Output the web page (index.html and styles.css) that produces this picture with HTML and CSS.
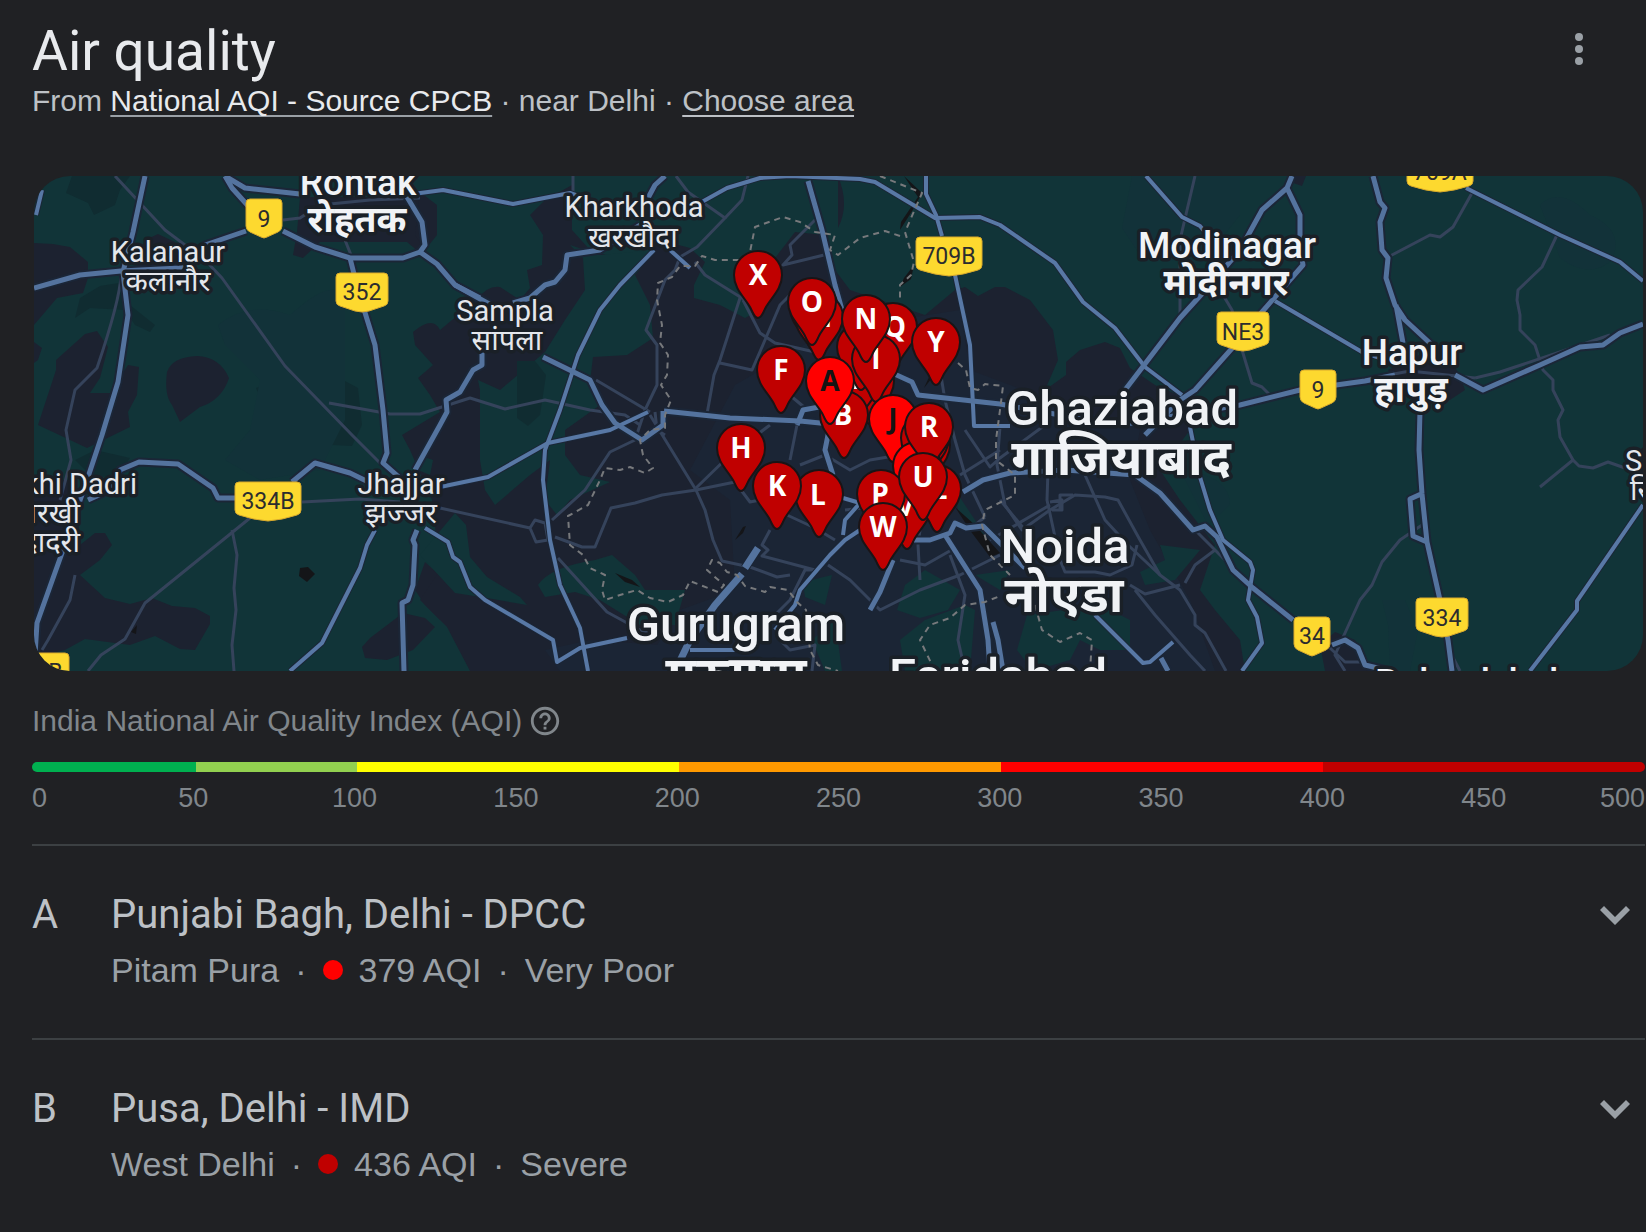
FILE: index.html
```html
<!DOCTYPE html>
<html lang="en">
<head>
  <meta charset="UTF-8">
  <meta name="viewport" content="width=device-width, initial-scale=1.0">
  <title>Air quality</title>
  <link rel="stylesheet" href="styles.css">
</head>
<body>
  <main class="panel">
    <header class="header">
      <div>
        <h1>Air quality</h1>
        <p class="source">From <a class="source-link" href="#">National AQI - Source CPCB</a> · near Delhi · <a href="#">Choose area</a></p>
      </div>
      <button class="icon-button" aria-label="More options">
        <svg width="36" height="36" viewBox="0 0 36 36"><circle cx="18" cy="6" r="4"/><circle cx="18" cy="18" r="4"/><circle cx="18" cy="30" r="4"/></svg>
      </button>
    </header>

    <!-- Map -->
    <svg class="map" viewBox="34 176 1609 495" role="img" aria-label="Map of stations near Delhi">
      <defs>
        <path id="pin" d="M0 43C-3 43-4 40-6 36C-10 25-24 16-24 0A24 24 0 0 1 24 0C24 16 10 25 6 36C4 40 3 43 0 43Z"/>
        <path id="shield1" d="M-14-19H14Q18-19 18-15V8Q18 12 14 14L3 19Q0 21-3 19L-14 14Q-18 12-18 8V-15Q-18-19-14-19Z"/>
        <path id="shield3" d="M-22-19H22Q26-19 26-15V9Q26 13 22 14L7 19Q0 21-7 19L-22 14Q-26 13-26 9V-15Q-26-19-22-19Z"/>
        <path id="shield4" d="M-29-19H29Q33-19 33-15V9Q33 13 29 14Q14 19 0 20Q-14 19-29 14Q-33 13-33 9V-15Q-33-19-29-19Z"/>
        <g id="highways">
          <path d="M145 176L133 232L123 272L128 315L118 382L102 435L88 477L62 553L37 623L35 655"/>
          <path d="M34 288L80 275L121 271L180 268L205 245L246 231M283 231L315 247L350 258H403L420 252L437 264L455 285L500 310M543 357L590 380L602 405L615 423L642 440L663 425V411"/>
          <path d="M225 176L232 188L250 208M225 176L245 188L300 194M407 197L422 222L425 245L420 252M350 258L358 290L375 345L383 410L387 453L383 463L400 478L405 500M417 530L413 540L415 545L413 585L408 600L402 603L404 671"/>
          <path d="M415 470L440 425L447 412L446 400L460 392L473 370L482 365V350M513 303L530 298L545 285L555 282L565 270L567 255L600 250L640 225M648 198L655 185L665 176"/>
          <path d="M455 285L480 298M88 500L110 490L120 470L139 462L178 464L213 488L218 498H235M292 482L315 463L350 473L385 490"/>
          <path d="M808 181L822 230L835 285L842 310M890 372L912 382L918 395L1000 404L1060 415L1120 425L1240 405L1300 390L1365 381L1395 375M1455 375L1483 390L1540 365L1580 347L1603 345L1620 333L1643 324"/>
          <path d="M664 411L730 418L800 421L830 424M830 405L803 410L797 425"/>
          <path d="M1125 390L1180 318L1210 285L1240 250L1262 210L1287 188L1292 176M1287 188L1300 215V245L1303 265L1255 320L1235 345L1195 390L1180 400L1145 435"/>
          <path d="M1373 176L1380 202L1385 208L1380 222L1382 250L1388 258L1386 278L1395 305L1405 320L1432 345M1396 305L1403 343M1420 410L1419 450L1422 494L1427 542L1440 600L1448 640L1452 671M1421 494L1410 499L1413 536L1427 542"/>
          <path d="M963 492L983 480L1010 473L1065 470L1135 475L1160 493L1193 530L1205 526L1217 537L1233 570L1253 588L1293 620M1332 645L1345 640L1358 648L1365 665L1390 671"/>
          <path d="M914 540L930 540L950 533L955 523L966 528L983 526L995 538L1025 568M945 535L980 590L988 640L990 671M993 622L998 640L1003 671M1161 658L1168 671M893 560L880 592L870 610M829 430L825 450L833 475"/>
        </g>
        <g id="main-roads">
          <path d="M413 194L443 190L513 204L570 193L595 202M700 203L727 188L760 178L790 176L860 179L875 182L935 218L980 217L1000 225L1055 263L1083 302L1115 328L1145 367L1182 395"/>
          <path d="M654 250L620 285L600 310L578 355L560 410L545 450L543 480L550 540L560 585L580 628L588 671"/>
          <path d="M375 530L367 545L360 568L322 643L290 671M440 487L488 477L548 443L610 430L648 412M425 528L448 542L453 557L460 562L470 587L485 600L553 640L557 662L580 648L627 638"/>
          <path d="M926 176V194L936 215L942 236M955 275L970 345L974 426H1010M670 250L690 268"/>
          <path d="M1146 176L1182 217L1200 226L1205 232M1275 301L1362 352L1380 358M1466 188L1560 235L1620 262L1643 281M1643 505L1577 601V610L1530 671"/>
          <path d="M1190 427L1200 477L1210 510L1223 540L1250 562L1253 570L1248 600L1257 617L1262 643L1242 671M1095 615L1100 620L1143 663L1150 662L1173 642"/>
          <path d="M860 530L845 540L830 555L800 590L795 605L775 630M690 650H735M843 498L860 503L845 520L843 535M36 215L42 190"/>
        </g>
        <path id="expressway" d="M758 548L745 568M742 574L715 605L690 640L678 665"/>
      </defs>

      <rect class="land" x="34" y="176" width="1609" height="495"/>

      <g class="shade">
        <path d="M72 176H130L120 190L115 205L94 215L88 203L66 193Z"/>
        <path d="M75 318L80 298L100 286L125 282L130 305L155 325L150 332L135 325L125 310L90 308Z"/>
        <path d="M256 388L282 378L284 398L305 405L315 425L310 446H298L302 430L285 418L262 402Z"/>
        <path d="M343 380L358 388L362 425L352 446L332 445Z"/>
        <path d="M75 460L95 450L130 458L122 470L95 480Z"/>
      </g>
      <g class="tint">
        <path d="M218 325Q250 300 290 315Q340 270 345 305V420L320 470L260 480L225 460L250 430L260 380L225 345Z"/>
        <path d="M1132 176H1240V215L1200 265L1140 255L1122 228Z"/>
        <path d="M1540 205Q1560 185 1590 215Q1625 230 1612 260Q1590 280 1560 258Z"/>
        <path d="M1382 600H1405L1418 630L1410 671H1390L1388 625Z"/>
        <path d="M1180 470Q1230 475 1230 505L1208 525Z"/>
      </g>

      <!-- Built-up areas -->
      <g class="urban">
        <path d="M34 243L53 244L70 247L88 262V278L83 293L57 298L40 318L34 325Z"/>
        <path d="M97 331L108 347L100 378L90 393H110L128 365L139 367L137 395L128 412L130 427L87 448L70 440L38 425L56 370V360L85 334Z"/>
        <path d="M34 342L42 348L38 360L34 363Z"/>
        <path d="M167 372Q172 357 197 356Q220 357 229 378Q222 400 200 407L180 422L172 405Q164 395 167 372Z"/>
        <path d="M145 240L158 234L175 242L182 258L198 270L170 275L135 272Z"/>
        <path d="M300 197H413L437 208V232L420 253L407 242H320L303 258L293 255L297 232Z"/>
        <path d="M34 480H75L80 545L95 533H105L112 545L100 560L80 575L105 598L130 604L152 598L172 606L195 608L210 616V624L195 650L180 649L155 636L130 645L85 639L65 650L45 655L34 650Z"/>
        <path d="M362 647L370 638L403 613L425 618L435 627L413 650L387 660L365 658Z"/>
        <path d="M415 590L425 562L440 575V620L425 605Z"/>
        <path d="M420 192L437 205V235L425 250L415 235Z"/>
        <path d="M413 332Q433 315 440 330L476 300Q488 285 500 287L520 300L530 288L527 270L542 265L543 235L530 215L545 200L572 185L572 230L590 250L640 265L660 240L690 248L705 262L694 285V298L720 305L745 318L760 310L772 262L795 232L825 235L835 270L850 290L925 315L955 290L965 287L978 296L995 287L1005 287L1030 300L1053 330L1058 360L1045 390L1066 375V362L1080 350L1105 342L1120 348L1130 368L1155 385L1190 400V430L1160 470L1180 500L1215 545L1200 590L1215 610L1240 640L1245 671H470L447 627L420 600L440 570L432 500L410 450L402 435L440 412L430 395L418 378L433 365L415 345Z"/>
        <path d="M838 176Q850 205 838 228Z"/>
        <path d="M1287 176H1306L1302 186L1290 182Z"/>
        <path d="M1388 370L1440 345L1460 375L1465 390L1450 400L1400 395Z"/>
        <path d="M1320 645L1335 632L1355 640L1370 665L1400 671H1325Z"/>
      </g>
      <path class="metro" d="M735 385L830 330L960 310L970 370L1050 400L1140 430L1130 480L1150 530L1190 600L1215 671H640L680 610L735 590L730 500L690 470Z"/>
      <path class="metro" d="M545 650L590 640L660 645V671H560Z"/>

      <!-- Green patches inside the city -->
      <g class="land">
        <path d="M570 245L600 255L655 250L635 275L650 305L653 338L627 355L593 357L590 382L600 405L565 430V455L580 475L610 482L570 500L557 515L545 500L550 460L530 475L495 505L485 490L480 460V390L478 380L500 390L545 352L565 320L585 290L583 258Z"/>
        <path d="M420 555L455 513L466 525L470 557L487 577L520 597L527 605L487 598L455 593V593Z"/>
        <path d="M538 585Q550 567 595 560L612 555L635 575L645 590L685 590L675 625H640L600 600L575 592L545 597Z"/>
        <path d="M803 582L832 575L825 605L805 597Z"/>
        <path d="M812 640L835 620L842 671H825Z"/>
        <path d="M925 570L960 590L948 610L920 618L897 610L905 585Z"/>
        <path d="M900 640L925 620L965 605L975 610L970 671H905Z"/>
        <path d="M1027 615L1100 605L1130 620V650H1100L1080 640L1070 660L1033 671L1017 650Z"/>
        <path d="M1140 572L1165 560L1160 545L1200 550L1175 580L1145 585Z"/>
        <path d="M955 490L975 520L985 535L970 530L958 510Z"/>
        <path d="M975 575L1010 570L1000 590Z"/>
        <path d="M418 455L433 460L430 475L418 470Z"/>
      </g>
      <path class="shade" d="M517 361H535L546 375L540 415L528 426L517 418Z"/>
      <g class="water">
        <path d="M300 568L308 567L315 574L307 582L299 576Z"/>
        <path d="M131 632L137 625L136 634Z"/>
        <path d="M904 176L922 193L914 208L900 230L901 222L918 197Z"/>
        <path d="M914 265L911 279L900 287L904 278Z"/>
        <path d="M955 507L975 525L1000 553L990 557L972 533Z"/>
        <path d="M735 540L743 527L746 526L743 533Z"/>
        <path d="M615 573L632 580L640 587L625 582Z"/>
        <path d="M920 365L932 378L924 388L930 375Z"/>
      </g>

      <!-- Roads -->
      <g class="road-minor">
        <path d="M115 176L165 230L205 260L222 278L285 366L352 435L385 468"/>
        <path d="M121 275Q120 300 97 368L75 390L66 430L71 460L60 500"/>
        <path d="M329 403L390 414H420L470 398L505 409L545 400L590 410L625 415L640 425"/>
        <path d="M250 518L145 603L125 639L101 655L88 671"/>
        <path d="M232 530L237 555L234 588L236 610L232 645L234 671"/>
        <path d="M302 502L360 499L400 502"/>
        <path d="M345 240L353 260"/>
        <path d="M283 220L300 218L320 205L370 200L420 198"/>
        <path d="M573 176V193M676 176L688 192L725 218L697 247L680 257L675 270L665 280L646 330L657 345V385L645 410L635 440L610 452L585 490L552 520"/>
        <path d="M440 508L530 528L535 520L545 523L548 540L536 542L530 528M555 537L582 547H595L611 508L635 503L662 495L696 490L735 482L741 480"/>
        <path d="M650 415L696 490L705 510L713 540L722 561L750 567L777 577L790 575"/>
        <path d="M558 558L607 612L640 630L680 638"/>
        <path d="M740 298L720 360L714 375L707 414M720 363L752 370L765 340L780 305L790 295M743 300L760 333L775 343L815 352"/>
        <path d="M695 262L705 275L745 300M818 217L790 245L792 255L783 265L824 255"/>
        <path d="M748 176L742 200L725 218M596 380L650 412M655 412L657 430L665 435"/>
        <path d="M696 488L730 455L770 425M741 490L750 502L760 500M787 515L815 528L835 540M792 397L810 412"/>
        <path d="M770 530L762 545L768 550L762 556L815 570L805 570L790 600L765 625"/>
        <path d="M845 510L890 505L920 530M828 565L850 580L880 610L920 590L960 575L1000 555"/>
        <path d="M800 465L825 455L850 470L870 460L900 455M797 425L790 460M940 370L945 400L955 440L965 475L985 517"/>
        <path d="M965 430L990 467L1000 458L1045 425M960 475L1000 450M1000 427L997 465L1005 505L1022 530L1050 510L1075 495L1105 497L1118 500L1140 540L1160 575L1180 590L1195 615V625L1205 633L1226 671"/>
        <path d="M1048 470L1047 500L1060 560L1065 572H1095L1110 575L1132 565L1137 545M1050 502L1062 500V510H1052M1085 475L1105 520L1128 545L1160 575M1060 510V495H1073"/>
        <path d="M990 540L1050 505M1000 500L1025 530M985 517L975 525M920 530L918 545L920 580M950 555L965 595L958 640L965 671"/>
        <path d="M900 560L925 565L955 548M1180 585L1145 594L1130 585M1195 530L1240 575M1185 583L1195 565L1215 550"/>
        <path d="M1135 590L1155 615L1190 655L1205 671M1090 610L1130 650M780 640L790 650L815 645L812 671"/>
        <path d="M1195 176L1180 240V320M1220 290L1232 310L1242 350L1252 383L1262 387L1272 397"/>
        <path d="M1472 193L1453 227L1440 237L1430 235L1390 256M1557 235L1542 267L1518 290L1517 300L1520 315V330L1535 345L1543 370L1553 380V390L1563 410L1558 420L1560 437L1573 460L1579 466L1593 468L1608 462L1625 468"/>
        <path d="M1573 460L1540 487M1475 378L1500 372L1560 352L1610 335M1372 378L1410 371L1475 378"/>
        <path d="M1422 525L1400 540L1382 562L1372 585L1360 600L1335 655L1345 671M1448 648L1460 671M1330 648L1345 662H1365"/>
        <path d="M75 575L70 600L48 640L42 650"/>
      </g>
      <use class="road-case" href="#main-roads"/>
      <use class="road-case highway-case" href="#highways"/>
      <use class="road-case highway-case" href="#expressway"/>
      <use class="road-thin" href="#main-roads"/>
      <use class="road" href="#highways"/>
      <use class="road expressway" href="#expressway"/>
      <path class="border" d="M880 176L922 193L905 232L914 262L911 275L900 285V302M900 236L885 231L860 238L838 255L830 250L835 235L815 232L800 222L783 217L755 227L750 252L740 260L715 260L702 256L695 266L680 266L672 277L658 283L657 300L662 325L660 343L668 355L667 375L661 385L671 400L665 415L665 428L650 430L640 440L643 455L653 468L645 473L630 467L620 470L605 468L600 480L588 505L568 516L570 545L583 555L590 568L605 575L602 590L605 600L620 595L637 590L650 598L668 602L683 595L690 581L718 592L724 585L707 570L712 560L720 563L727 572L737 575L745 586L765 592L770 587L788 590L797 602L806 610L810 650L818 665L838 671"/>
      <path class="border" d="M958 363L966 370L970 388L978 390L985 384L1003 386L1000 410L996 440V460L1015 475L1015 495L985 510L982 525L990 555L1010 575M1035 605L1042 630L1060 642L1080 633L1092 640L1090 671M935 671L920 640L930 625L950 618L965 605L985 602L1000 596"/>

      <!-- Route shields -->
      <g class="shield">
        <use href="#shield1" x="264" y="218"/><text x="264" y="227">9</text>
        <use href="#shield3" x="362" y="292"/><text x="362" y="300">352</text>
        <use href="#shield4" x="268" y="501"/><text x="268" y="509">334B</text>
        <use href="#shield4" x="949" y="256"/><text x="949" y="264">709B</text>
        <use href="#shield3" x="1243" y="331"/><text x="1243" y="340">NE3</text>
        <use href="#shield1" x="1318" y="389"/><text x="1318" y="398">9</text>
        <use href="#shield1" x="1312" y="636"/><text x="1312" y="644">34</text>
        <use href="#shield3" x="1442" y="617"/><text x="1442" y="626">334</text>
        <use href="#shield4" x="1440" y="172"/><text x="1440" y="180">709A</text>
        <use href="#shield4" x="36" y="672"/><text x="36" y="680">148B</text>
      </g>

      <!-- Place names -->
      <g class="place town">
        <text x="168" y="262">Kalanaur</text><text class="hi" x="168" y="291">कलानौर</text>
        <text x="634" y="217">Kharkhoda</text><text class="hi" x="633" y="247">खरखौदा</text>
        <text x="505" y="321">Sampla</text><text class="hi" x="507" y="350">सांपला</text>
        <text x="401" y="494">Jhajjar</text><text class="hi" x="401" y="523">झज्जर</text>
        <text class="end" x="137" y="494">Charkhi Dadri</text><text class="hi end" x="80" y="523">चरखी</text><text class="hi end" x="80" y="552">दादरी</text>
        <text class="start" x="1625" y="471">Siana</text><text class="hi start" x="1630" y="500">सियाना</text>
      </g>
      <g class="place district">
        <text x="358" y="195">Rohtak</text><text class="hi" x="357" y="232">रोहतक</text>
        <text x="1227" y="258">Modinagar</text><text class="hi" x="1226" y="295">मोदीनगर</text>
        <text x="1412" y="365">Hapur</text><text class="hi" x="1411" y="402">हापुड़</text>
        <text x="1479" y="695">Bulandshahr</text>
      </g>
      <g class="place city">
        <text x="1122" y="425">Ghaziabad</text><text class="hi" x="1121" y="475">गाजियाबाद</text>
        <text x="1065" y="563">Noida</text><text class="hi" x="1064" y="612">नोएडा</text>
        <text x="736" y="641">Gurugram</text><text class="hi" x="736" y="692">गुरुग्राम</text>
        <text x="998" y="693">Faridabad</text>
      </g>

      <!-- Station pins, back to front -->
      <g class="pins">
        <g><use href="#pin" x="814" y="308"/></g>
        <g><use href="#pin" x="819" y="317"/><text x="819" y="327">M</text></g>
        <g><use href="#pin" x="893" y="327"/><text x="895" y="337">Q</text></g>
        <g><use href="#pin" x="870" y="381"/></g>
        <g><use href="#pin" x="856" y="379"/><text x="856" y="389">E</text></g>
        <g><use href="#pin" x="861" y="347"/></g>
        <g><use href="#pin" x="876" y="359"/><text x="876" y="369">I</text></g>
        <g><use href="#pin" x="866" y="319"/><text x="866" y="329">N</text></g>
        <g><use href="#pin" x="812" y="302"/><text x="812" y="312">O</text></g>
        <g><use href="#pin" x="758" y="275"/><text x="758" y="285">X</text></g>
        <g><use href="#pin" x="936" y="342"/><text x="936" y="352">Y</text></g>
        <g><use href="#pin" x="781" y="370"/><text x="781" y="380">F</text></g>
        <g><use href="#pin" x="844" y="415"/><text x="843" y="425">B</text></g>
        <g class="very-poor"><use href="#pin" x="830" y="381"/><text x="830" y="391">A</text></g>
        <g class="very-poor"><use href="#pin" x="893" y="419"/><text x="893" y="429">J</text></g>
        <g><use href="#pin" x="926" y="445"/></g>
        <g><use href="#pin" x="925" y="438"/></g>
        <g class="very-poor"><use href="#pin" x="917" y="466"/></g>
        <g><use href="#pin" x="929" y="427"/><text x="929" y="437">R</text></g>
        <g><use href="#pin" x="741" y="448"/><text x="741" y="458">H</text></g>
        <g><use href="#pin" x="819" y="494"/><text x="818" y="505">L</text></g>
        <g><use href="#pin" x="777" y="486"/><text x="777" y="496">K</text></g>
        <g><use href="#pin" x="907" y="506"/><text x="905" y="516">V</text></g>
        <g><use href="#pin" x="881" y="494"/><text x="880" y="504">P</text></g>
        <g><use href="#pin" x="937" y="489"/><text x="939" y="499">Z</text></g>
        <g><use href="#pin" x="923" y="477"/><text x="923" y="487">U</text></g>
        <g><use href="#pin" x="883" y="527"/><text x="883" y="537">W</text></g>
      </g>
    </svg>

    <!-- AQI scale -->
    <section class="scale">
      <div class="scale-title">
        <span>India National Air Quality Index (AQI)</span>
        <button class="icon-button" aria-label="About this index">
          <svg width="34" height="34" viewBox="0 0 24 24"><path d="M11 18h2v-2h-2v2zm1-16C6.480 2 2 6.480 2 12s4.480 10 10 10 10-4.480 10-10S17.520 2 12 2zm0 18c-4.410 0-8-3.590-8-8s3.590-8 8-8 8 3.590 8 8-3.590 8-8 8zm0-14c-2.210 0-4 1.790-4 4h2c0-1.100.9-2 2-2s2 .9 2 2c0 2-3 1.750-3 5h2c0-2.250 3-2.500 3-5 0-2.210-1.790-4-4-4z"/></svg>
        </button>
      </div>
      <div class="bar">
        <span class="good"></span>
        <span class="satisfactory"></span>
        <span class="moderate"></span>
        <span class="poor"></span>
        <span class="very-poor-bg"></span>
        <span class="severe"></span>
      </div>
      <div class="ticks">
        <span>0</span><span>50</span><span>100</span><span>150</span><span>200</span><span>250</span><span>300</span><span>350</span><span>400</span><span>450</span><span>500</span>
      </div>
    </section>

    <!-- Stations -->
    <ul class="stations">
      <li>
        <span class="letter">A</span>
        <div class="station">
          <h2>Punjabi Bagh, Delhi - DPCC</h2>
          <p class="reading"><span>Pitam Pura</span><span>·</span><span class="dot very-poor-bg"></span><span>379 AQI</span><span>·</span><span>Very Poor</span></p>
        </div>
        <button class="icon-button" aria-label="Expand Punjabi Bagh">
          <svg width="30" height="20" viewBox="0 0 30 20"><path d="M4 0L15 11L26 0L30 4L15 19L0 4Z"/></svg>
        </button>
      </li>
      <li>
        <span class="letter">B</span>
        <div class="station">
          <h2>Pusa, Delhi - IMD</h2>
          <p class="reading"><span>West Delhi</span><span>·</span><span class="dot severe"></span><span>436 AQI</span><span>·</span><span>Severe</span></p>
        </div>
        <button class="icon-button" aria-label="Expand Pusa">
          <svg width="30" height="20" viewBox="0 0 30 20"><path d="M4 0L15 11L26 0L30 4L15 19L0 4Z"/></svg>
        </button>
      </li>
    </ul>
  </main>
</body>
</html>
```
FILE: styles.css
```css
* {
  box-sizing: border-box;
}

body {
  margin: 0;
  background-color: #202124;
  color: #bdc1c6;
  font-family: "Liberation Sans", Arial, sans-serif;
}

h1, h2, p, ul {
  margin: 0;
  padding: 0;
  font-weight: 400;
}

.panel {
  padding: 19px 1px 0 32px;
}

.icon-button {
  display: flex;
  padding: 0;
  border: none;
  background: transparent;
  fill: #9aa0a6;
  cursor: pointer;
}

/* Header */
.header {
  display: flex;
  justify-content: space-between;
  align-items: flex-start;
  padding-right: 48px;
  margin-bottom: 57px;
}

.header .icon-button {
  padding-top: 12px;
}

h1 {
  color: #e8eaed;
  font-family: "Google Sans", Roboto, sans-serif;
  font-size: 55px;
  line-height: 64px;
}

.source {
  font-size: 30px;
  line-height: 36px;
}

.source a {
  color: #bdc1c6;
  text-decoration-thickness: 2px;
  text-underline-offset: 4px;
  text-decoration-skip-ink: none;
}

.source .source-link {
  color: #e8eaed;
  text-decoration-color: #9aa0a6;
}

/* Map */
.map {
  display: block;
  width: calc(100% - 4px);
  height: auto;
  margin: 0 2px;
  border-radius: 36px;
}

.land { fill: #113438; }
.shade { fill: #102c31; }
.tint { fill: #123239; }
.urban { fill: #1c2230; }
.metro { fill: #1b2535; }
.water { fill: #141518; }

.road, .road-case, .road-minor, .road-thin, .border {
  fill: none;
  stroke-linejoin: round;
}

.road-minor { stroke: #35435b; stroke-width: 3px; }
.road-case { stroke: #1b2637; stroke-width: 6px; }
.highway-case { stroke-width: 9px; }
.road { stroke: #54739e; stroke-width: 5px; }
.expressway { stroke-width: 7px; }
.road-thin { stroke: #5878a5; stroke-width: 4px; }
.border { stroke: #77797c; stroke-width: 2px; stroke-dasharray: 6 5; }

.shield use {
  fill: #fdd92f;
  stroke: #d9a92c;
  stroke-width: 1px;
}

.shield text {
  fill: #2b2c2e;
  font-family: Roboto, sans-serif;
  font-size: 23px;
  text-anchor: middle;
}

.place {
  fill: #f1f3f6;
  stroke: #1a2027;
  stroke-width: 7px;
  stroke-linejoin: round;
  paint-order: stroke;
  font-family: Roboto, "Noto Sans", sans-serif;
  text-anchor: middle;
}

.town { fill: #e4e7ec; font-size: 29px; }
.town .hi { font-size: 29px; }
.district { font-size: 37px; font-weight: 500; }
.district .hi { font-size: 36px; font-weight: 700; }
.city { font-size: 49px; font-weight: 500; }
.city .hi { font-size: 50px; font-weight: 700; }
.start { text-anchor: start; }
.end { text-anchor: end; }

.pins {
  fill: #c00000;
  font-family: "Open Sans", sans-serif;
  font-size: 28px;
  font-weight: 700;
  text-anchor: middle;
}

.pins use { stroke: #1a1416; stroke-width: 2px; }
.pins text { fill: #fff; }
.pins .very-poor { fill: #f00; }
.pins .very-poor text { fill: #141414; }

/* Scale */
.scale {
  padding: 30px 0 28px;
  color: #80868b;
}

.scale-title {
  display: flex;
  align-items: center;
  gap: 6px;
  font-size: 30px;
  line-height: 40px;
}

.scale-title .icon-button {
  fill: #80868b;
}

.bar {
  display: flex;
  height: 10px;
  margin-top: 21px;
  border-radius: 5px;
  overflow: hidden;
}

.bar span { flex: 2; }
.bar .good { flex: 1; padding-left: 3px; }
.bar .satisfactory { flex: 1; }

.good { background-color: #00b050; }
.satisfactory { background-color: #92d050; }
.moderate { background-color: #ff0; }
.poor { background-color: #f90; }
.very-poor-bg { background-color: #f00; }
.severe { background-color: #c00000; }

.ticks {
  display: flex;
  margin-top: 8px;
  font-size: 27px;
  line-height: 36px;
}

.ticks span {
  flex: 2 0 0;
  text-align: center;
}

.ticks span:first-child { flex: 1 0 0; text-align: left; }
.ticks span:last-child { flex: 1 0 0; text-align: right; }

/* Stations */
.stations {
  list-style: none;
}

.stations li {
  display: flex;
  align-items: flex-start;
  padding: 44px 15px 48px 0;
  border-top: 2px solid #3c4043;
}

.letter, h2 {
  font-family: "Google Sans", Roboto, sans-serif;
  font-size: 40px;
  line-height: 50px;
}

.letter {
  width: 79px;
}

.station {
  flex: 1;
}

.reading {
  display: flex;
  align-items: center;
  gap: 16px;
  padding-top: 10px;
  color: #9aa0a6;
  font-size: 34px;
  line-height: 40px;
}

.dot {
  width: 20px;
  height: 20px;
  border-radius: 50%;
}

.stations .icon-button {
  padding-top: 16px;
}
```
